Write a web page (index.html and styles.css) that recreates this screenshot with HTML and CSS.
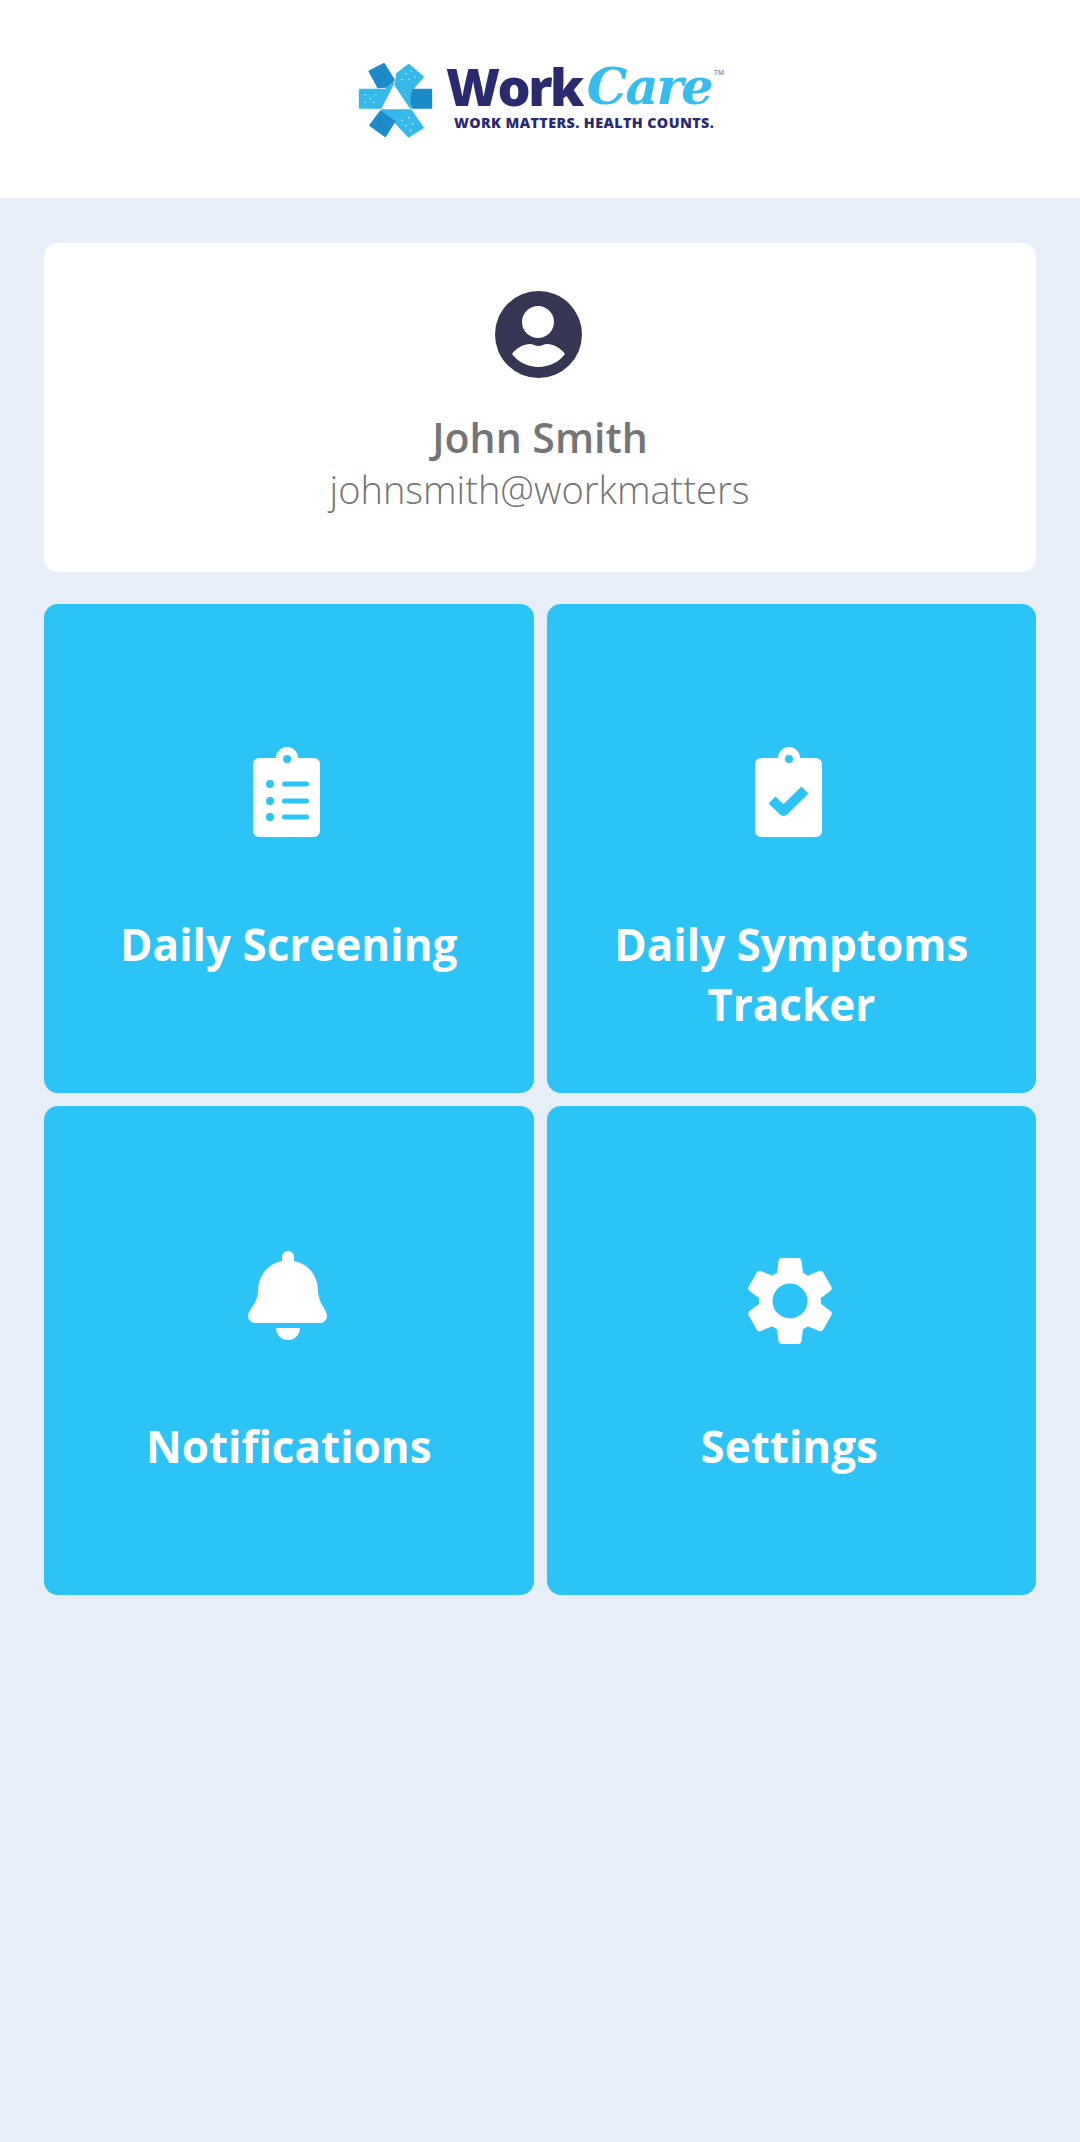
FILE: index.html
```html
<!DOCTYPE html>
<html lang="en">
<head>
  <meta charset="UTF-8" />
  <meta name="viewport" content="width=device-width, initial-scale=1" />
  <title>WorkCare</title>
  <link rel="stylesheet" href="styles.css">
</head>
<body>
  <header class="top-bar">
    <div class="logo">
      <svg class="logo-mark" viewBox="0 0 264 252" aria-hidden="true">
        <g stroke-width="5" stroke-linejoin="round">
          <path fill="#35b8ea" stroke="#35b8ea" d="M23 98H100L125 78 86 153H23Z"/>
          <path fill="#35b8ea" stroke="#35b8ea" d="M135 50 170 23 213 60 180 98 176 153 130 85Z"/>
          <path fill="#35b8ea" stroke="#35b8ea" d="M88 159H176L213 212 170 239 122 188Z"/>
          <path fill="#1c8bc9" stroke="#1c8bc9" d="M52 43 96 20 126 69 102 90 78 91Z"/>
          <path fill="#1c8bc9" stroke="#1c8bc9" d="M184 98H238V153H182C176 135 176 115 184 98Z"/>
          <path fill="#1c8bc9" stroke="#1c8bc9" d="M54 205 86 163 128 193 100 238Z"/>
        </g>
        <g fill="#c9eefb">
          <circle cx="162" cy="50" r="2.500"/><circle cx="178" cy="42" r="2.500"/><circle cx="150" cy="68" r="2.500"/><circle cx="172" cy="66" r="2.500"/><circle cx="190" cy="60" r="2.500"/>
          <circle cx="40" cy="114" r="2.500"/><circle cx="56" cy="126" r="2.500"/><circle cx="72" cy="114" r="2.500"/><circle cx="40" cy="136" r="2.500"/><circle cx="66" cy="136" r="2.500"/>
          <circle cx="150" cy="190" r="2.500"/><circle cx="170" cy="182" r="2.500"/><circle cx="162" cy="206" r="2.500"/><circle cx="182" cy="200" r="2.500"/><circle cx="176" cy="220" r="2.500"/>
        </g>
        <g fill="#136fa8">
          <circle cx="80" cy="44" r="2"/><circle cx="98" cy="56" r="2"/><circle cx="76" cy="66" r="2"/>
          <circle cx="200" cy="115" r="2"/><circle cx="222" cy="115" r="2"/><circle cx="210" cy="136" r="2"/>
          <circle cx="82" cy="190" r="2"/><circle cx="100" cy="204" r="2"/><circle cx="78" cy="212" r="2"/>
        </g>
      </svg>
      <div class="logo-text">
        <div class="logo-name"><span class="logo-work">Work</span><span class="logo-care">Care</span><span class="logo-tm">TM</span></div>
        <div class="logo-tag">WORK MATTERS. HEALTH COUNTS.</div>
      </div>
    </div>
  </header>

  <main class="content">
    <section class="profile">
      <svg class="avatar" viewBox="0 0 87 87" aria-hidden="true">
        <circle cx="43.5" cy="43.5" r="43.5" fill="#343654"/>
        <circle cx="43" cy="31" r="16" fill="#fff"/>
        <path fill="#fff" d="M17 63C21 57 29 53 35 53 38 53 40 55 43.5 55 47 55 49 53 52 53 58 53 66 57 70 63 64 71 54 76 43.500 76 33 76 23 71 17 63Z"/>
      </svg>
      <div class="profile-name">John Smith</div>
      <div class="profile-email">johnsmith@workmatters</div>
    </section>

    <section class="tiles">
      <a class="tile">
        <svg class="tile-icon" viewBox="0 0 100 110" aria-hidden="true">
          <path fill="#fff" fill-rule="evenodd" d="M22 18H39A11 11 0 0 1 61 18H77A6 6 0 0 1 83 24V91A6 6 0 0 1 77 97H22A6 6 0 0 1 16 91V24A6 6 0 0 1 22 18ZM50 15A4 4 0 1 0 50 23 4 4 0 0 0 50 15Z"/>
          <g fill="#2cc3f6">
            <circle cx="33" cy="44" r="4"/><circle cx="33" cy="61" r="4"/><circle cx="33" cy="77" r="4"/>
            <rect x="45" y="41.500" width="27" height="5" rx="2.500"/><rect x="45" y="58.500" width="27" height="5" rx="2.500"/><rect x="45" y="74.500" width="27" height="5" rx="2.500"/>
          </g>
        </svg>
        <div class="tile-label">Daily Screening</div>
      </a>
      <a class="tile">
        <svg class="tile-icon" viewBox="0 0 100 110" aria-hidden="true">
          <path fill="#fff" fill-rule="evenodd" d="M22 18H39A11 11 0 0 1 61 18H77A6 6 0 0 1 83 24V91A6 6 0 0 1 77 97H22A6 6 0 0 1 16 91V24A6 6 0 0 1 22 18ZM50 15A4 4 0 1 0 50 23 4 4 0 0 0 50 15Z"/>
          <path fill="none" stroke="#2cc3f6" stroke-width="10" stroke-linejoin="round" d="M33 60 44.500 71 66 50"/>
        </svg>
        <div class="tile-label">Daily Symptoms Tracker</div>
      </a>
      <a class="tile">
        <svg class="tile-icon" viewBox="0 0 100 110" aria-hidden="true">
          <path fill="#fff" d="M51 9A6 6 0 0 1 57 15V19C72 22 81 34 81 50 82 62 90 68 90 74A7 7 0 0 1 83 81H18A7 7 0 0 1 11 74C11 68 20 62 21 50 21 34 30 22 45 19V15A6 6 0 0 1 51 9Z"/>
          <path fill="#fff" d="M39 86H63A12 12 0 0 1 39 86Z"/>
        </svg>
        <div class="tile-label">Notifications</div>
      </a>
      <a class="tile">
        <svg class="tile-icon" viewBox="0 0 100 110" aria-hidden="true">
          <g transform="translate(51 59)" fill="#fff">
            <circle r="24.250" fill="none" stroke="#fff" stroke-width="13.500"/>
            <path id="tooth" d="M-8-43H8Q11-43 11.500-40L13-28H-13L-11.500-40Q-11-43-8-43Z"/>
            <use href="#tooth" transform="rotate(60)"/>
            <use href="#tooth" transform="rotate(120)"/>
            <use href="#tooth" transform="rotate(180)"/>
            <use href="#tooth" transform="rotate(240)"/>
            <use href="#tooth" transform="rotate(300)"/>
          </g>
        </svg>
        <div class="tile-label tile-label-short">Settings</div>
      </a>
    </section>
  </main>
</body>
</html>
```

FILE: styles.css
```css
body {
  margin: 0;
  min-height: 2142px;
  font-family: 'Open Sans', sans-serif;
  background: #e8eef7;
  color: #757575;
}
.top-bar {
  height: 198px;
  background: #fff;
  display: flex;
  justify-content: center;
  align-items: center;
}
.logo {
  display: flex;
  align-items: flex-start;
  gap: 6px;
  margin-left: -6px;
}
.logo-mark {
  width: 88px;
  height: 84px;
  display: block;
}
.logo-text {
  display: flex;
  flex-direction: column;
  width: 276px;
  padding-top: 3px;
}
.logo-name {
  display: flex;
  height: 52px;
  line-height: 52px;
  font-size: 52px;
  font-weight: 800;
}
.logo-work {
  color: #2a2a6e;
  letter-spacing: -2.500px;
}
.logo-care {
  font-family: 'DejaVu Serif', serif;
  font-style: italic;
  font-weight: 700;
  font-size: 51px;
  color: #36bdf0;
  letter-spacing: -2px;
  margin-left: 5px;
}
.logo-tm {
  font-size: 7px;
  line-height: 10px;
  font-weight: 700;
  color: #8fa3b5;
  margin: 8px 0 0 2px;
}
.logo-tag {
  font-size: 14.300px;
  line-height: 16px;
  font-weight: 800;
  letter-spacing: 0.400px;
  white-space: nowrap;
  color: #2a2a6e;
  margin: 3px 0 0 8px;
}
.content {
  padding: 45px 44px 0;
}
.profile {
  background: #fff;
  border-radius: 14px;
  padding: 48px 0 56px;
  display: flex;
  flex-direction: column;
  align-items: center;
}
.avatar {
  width: 87px;
  height: 87px;
  display: block;
  margin: 0 3px 32px 0;
}
.profile-name {
  font-size: 41px;
  line-height: 54px;
  font-weight: 600;
}
.profile-email {
  font-size: 38px;
  line-height: 54px;
  font-weight: 300;
  margin: -2px 1px 0 0;
}
.tiles {
  display: grid;
  grid-template-columns: 1fr 1fr;
  gap: 13px;
  margin-top: 32px;
}
.tile {
  height: 489px;
  box-sizing: border-box;
  background: #2cc3f6;
  border-radius: 14px;
  padding: 136px 30px 0;
  color: #fff;
  text-align: center;
}
.tile-icon {
  width: 100px;
  height: 110px;
  display: block;
  margin: 0 auto 64px;
  position: relative;
  left: -2px;
}
.tile-label {
  font-size: 44px;
  line-height: 60px;
  font-weight: 700;
}
.tile-label-short {
  margin-right: 4px;
}
```
